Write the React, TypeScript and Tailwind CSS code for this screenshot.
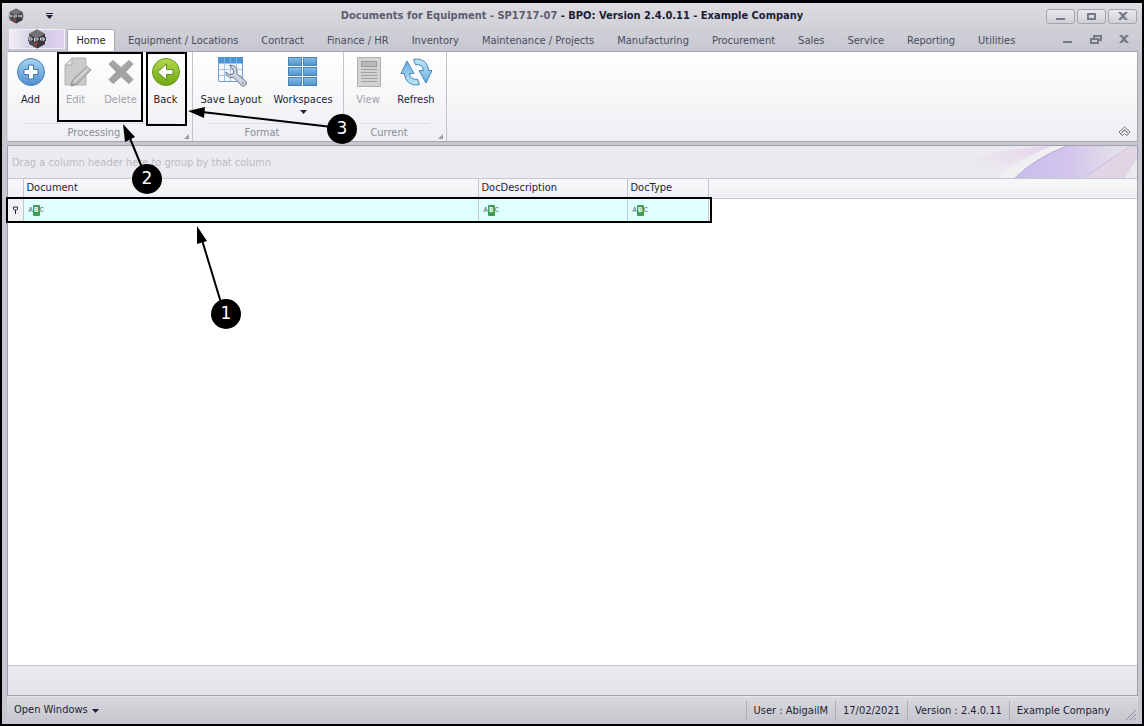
// App.tsx
import React from 'react';
import clsx from 'clsx';

const tabs = [
    'Equipment / Locations',
    'Contract',
    'Finance / HR',
    'Inventory',
    'Maintenance / Projects',
    'Manufacturing',
    'Procurement',
    'Sales',
    'Service',
    'Reporting',
    'Utilities',
];

const columns = [
    { name: 'Document', width: 'w-[455px]' },
    { name: 'DocDescription', width: 'w-[149px]' },
    { name: 'DocType', width: 'w-[81px]' },
];

const LogoIcon: React.FC<{ className?: string }> = ({ className }) => (
    <svg viewBox="0 0 20 20" className={className} aria-hidden="true">
        <path d="M10 .5 18 5v10l-8 4.500L2 15V5z" fill="#4b4b50" />
        <path d="M10 .5 18 5l-8 4.500L2 5z" fill="#737378" />
        <path d="M10 9.500 18 5v10l-8 4.500z" fill="#38383d" />
        <path d="M1 8h18v4H1z" fill="#333338" />
        <path
            d="M2 7v4h3v-2H2M7.500 12.500V9h3.500v2H7.500M13.500 9h3.500v2h-3.500zM17 9v2.500"
            fill="none"
            stroke="#d8d8dc"
            strokeWidth="1"
        />
        <path d="M7 14.500 9 16l1-3" fill="none" stroke="#b13a3f" strokeWidth="1.500" />
    </svg>
);

const AddIcon = () => (
    <svg viewBox="0 0 32 32" className="size-8" aria-hidden="true">
        <defs>
            <linearGradient id="addFill" x1="0" y1="0" x2="0" y2="1">
                <stop offset="0" stopColor="#a9d2f0" />
                <stop offset="1" stopColor="#4d8fce" />
            </linearGradient>
        </defs>
        <circle cx="16" cy="16" r="13.500" fill="url(#addFill)" stroke="#4a7fb5" />
        <path
            d="M13.500 9h5v4.500H23v5h-4.500V23h-5v-4.500H9v-5h4.500z"
            fill="#fff"
            stroke="#3f78b0"
            strokeLinejoin="round"
        />
    </svg>
);

const EditIcon = () => (
    <svg viewBox="0 0 32 32" className="size-8" aria-hidden="true">
        <path d="M12 2h14v27H5V9z" fill="#cbcbcb" stroke="#b4b4b4" />
        <path d="M12 2v7H5z" fill="#e2e2e2" stroke="#adadad" />
        <path d="m11 30 1.500-6L27 10.500l4 3.500-14 14z" fill="#bdbdbd" stroke="#929292" strokeLinejoin="round" />
        <path d="m14.500 25.500 14-13.500" stroke="#dcdcdc" strokeWidth="1.500" />
        <path d="m11 30 .8-3 2.200 2z" fill="#888" />
    </svg>
);

const DeleteIcon = () => (
    <svg viewBox="0 0 32 32" className="size-8" aria-hidden="true">
        <path
            d="M4 8 8 4.500l8 7 8-7L28 8l-7.500 8 7.500 7.500-4 4-8-7-8 7-4-4L11.500 16z"
            fill="#a3a3a3"
            stroke="#969696"
            strokeLinejoin="round"
        />
        <path d="m5 8 3-2.500 8 7 8-7L27 8" fill="none" stroke="#b6b6b6" />
    </svg>
);

const BackIcon = () => (
    <svg viewBox="0 0 32 32" className="size-8" aria-hidden="true">
        <defs>
            <linearGradient id="backFill" x1="0" y1="0" x2="0" y2="1">
                <stop offset="0" stopColor="#b4d84d" />
                <stop offset="1" stopColor="#6fa812" />
            </linearGradient>
        </defs>
        <circle cx="16" cy="16" r="13.500" fill="url(#backFill)" stroke="#669a1c" />
        <path
            d="m7.500 16 9-8v5.500H23v5h-6.500V24z"
            fill="#fff"
            stroke="#5c8f15"
            strokeLinejoin="round"
        />
    </svg>
);

const SaveLayoutIcon = () => (
    <svg viewBox="0 0 32 32" className="size-8" aria-hidden="true">
        <path d="M3.500 2.500h24v23h-24z" fill="#f3f8fd" stroke="#7a9fce" />
        <path d="M3 1h25v6.500H3z" fill="#4b93d1" />
        <path d="M9.500 1v6M15.500 1v6M21.500 1v6" stroke="#7db2e0" />
        <path d="M9.500 8v17M15.500 8v17M21.500 8v17M4 13.500h23M4 19.500h23" stroke="#a9c5e6" />
        <path
            d="M14.500 9.500c4-1 7.500 1.500 7.500 5.500 0 1-.2 1.700-.5 2.500l9 7.500c2.500 2.500-1 7-4 4.500l-8-8.300c-4 1.300-7.500-1-7.500-5.200l4 3 3.200-1.200.5-3.300z"
            fill="#cdd3de"
            stroke="#697385"
            strokeLinejoin="round"
        />
        <circle cx="28" cy="27" r="1" fill="#fff" stroke="#697385" strokeWidth=".6" />
    </svg>
);

const WorkspacesIcon = () => (
    <svg viewBox="0 0 32 32" className="size-8" aria-hidden="true">
        <defs>
            <linearGradient id="tileFill" x1="0" y1="0" x2="0" y2="1">
                <stop offset="0" stopColor="#84bce6" />
                <stop offset="1" stopColor="#4d94cf" />
            </linearGradient>
        </defs>
        {[1.5, 11.5, 21.5].map((y) =>
            [1.5, 16.5].map((x) => (
                <rect key={`${x}-${y}`} x={x} y={y} width="13" height="8" fill="url(#tileFill)" stroke="#4a80b6" />
            )),
        )}
    </svg>
);

const ViewIcon = () => (
    <svg viewBox="0 0 32 32" className="size-8" aria-hidden="true">
        <path d="M5.500 1.500h23v29h-23z" fill="#d2d2d2" stroke="#b0b0b0" />
        <path d="M9.500 5.500h15v5h-15z" fill="#b9b9b9" stroke="#9a9a9a" />
        <path d="M9 13.500h16M9 16.500h16M9 19.500h16M9 22.500h16M9 25.500h16" stroke="#a0a0a0" />
    </svg>
);

const refreshArrow = 'M13.500 3.500C22 1.500 28.500 7 28.500 14.500H32L26 27l-7-12.500h4.500c-.5-4-3.500-6.500-8-5.700z';

const RefreshIcon = () => (
    <svg viewBox="0 0 32 32" className="size-8" aria-hidden="true">
        <defs>
            <linearGradient id="refreshFill" x1="0" y1="0" x2="0" y2="1">
                <stop offset="0" stopColor="#c0e4f8" />
                <stop offset="1" stopColor="#66aee2" />
            </linearGradient>
        </defs>
        <g fill="url(#refreshFill)" stroke="#4684b8" strokeLinejoin="round">
            <path d={refreshArrow} />
            <path d={refreshArrow} transform="rotate(180 16.500 16)" />
        </g>
    </svg>
);

type RibbonButtonProps = {
    label: string;
    icon: React.ReactNode;
    width?: string;
    disabled?: boolean;
    menu?: boolean;
};

const RibbonButton: React.FC<RibbonButtonProps> = ({ label, icon, width = 'w-[45px]', disabled, menu }) => (
    <button
        type="button"
        disabled={disabled}
        className={clsx(
            'flex flex-col items-center whitespace-nowrap',
            width,
            disabled ? 'text-[#a0a0a8]' : 'text-[#1e1e38]',
        )}
    >
        {icon}
        <span className="mt-1 leading-4">{label}</span>
        {menu && <Caret className="mt-0.5" />}
    </button>
);

const Caret: React.FC<{ className?: string }> = ({ className }) => (
    <svg viewBox="0 0 7 4" className={clsx('h-1 w-[7px]', className)} aria-hidden="true">
        <path d="M0 0h7L3.500 4z" fill="#1e1e38" />
    </svg>
);

const RibbonGroup: React.FC<{ title: string; launcher?: boolean; children: React.ReactNode }> = ({
    title,
    launcher,
    children,
}) => (
    <section className="flex flex-col border-r border-[#c3c4cb]">
        <div className="flex flex-1 pt-1 pr-1">{children}</div>
        <div className="mx-4 h-px bg-[#dfe0e5]" />
        <div className="flex h-[17px] items-center pt-0.5 text-[#8b8c98]">
            <span className="flex-1 text-center">{title}</span>
            <span className="flex w-3 self-stretch">
                {launcher && (
                    <button type="button" aria-label={`${title} options`} className="self-end pb-0.5 pl-1">
                        <svg viewBox="0 0 5 5" className="size-[5px]" aria-hidden="true">
                            <path d="M5 0v5H0z" fill="#9b9ca6" />
                        </svg>
                    </button>
                )}
            </span>
        </div>
    </section>
);

const captionPaths = {
    Minimize: 'M3 9h9v2H3z',
    Maximize: 'M3 4h9v7H3zM5 6v3h5V6z',
    Close: 'M3 3h3l2 2 2-2h3L9.500 7l3.500 4h-3L8 9l-2 2H3l3.500-4z',
    Restore: 'M5 3h9v6h-3v3H2V6h3zM7 5v1h4v1h1V5zM4 8v2h5V8z',
};

const CaptionButton: React.FC<{ name: keyof typeof captionPaths; label: string; framed?: boolean }> = ({
    name,
    label,
    framed,
}) => (
    <button
        type="button"
        aria-label={label}
        className={clsx(
            'flex items-center justify-center',
            framed
                ? 'h-[15px] w-[29px] rounded-[3px] border border-[#a3a4ae] bg-linear-to-b from-[#e9e9ed] to-[#cfd0d7]'
                : 'h-4 w-7',
        )}
    >
        <svg viewBox="0 0 16 14" className="h-3.5 w-4" aria-hidden="true">
            <path d={captionPaths[name]} fill="#777987" fillRule="evenodd" />
        </svg>
    </button>
);

const FilterIcon = () => (
    <span aria-hidden="true" className="flex items-center font-['Liberation_Mono',monospace] text-[7px] leading-none text-[#4f6266]">
        A
        <span className="flex h-[11px] w-[7px] items-center justify-center rounded-[1px] bg-[#3f9f51] font-bold text-white">B</span>
        C
    </span>
);

const Callout: React.FC<{ number: number; position: string }> = ({ number, position }) => (
    <span
        className={clsx(
            "absolute flex size-[30px] items-center justify-center rounded-full bg-black font-['DejaVu_Sans',sans-serif] text-[17px] text-white",
            position,
        )}
    >
        {number}
    </span>
);

const Annotations = () => (
    <div className="pointer-events-none absolute inset-0">
        <div className="absolute top-[52px] left-[57px] h-[70px] w-[86px] border-2 border-black" />
        <div className="absolute top-[52px] left-[146px] h-[74px] w-[41px] border-2 border-black" />
        <div className="absolute top-[197px] left-[6px] h-[26px] w-[706px] border-2 border-black" />
        <svg width="400" height="340" className="absolute top-0 left-0" aria-hidden="true">
            <path d="m202 240 20 66M129 136l14 34M202 112l130 15" stroke="#000" strokeWidth="2" />
            <path d="m197 226 10 15-10 3zM123 124l12 13-10 5zM188 111l17-4-1 11z" />
        </svg>
        <Callout number={1} position="top-[299px] left-[211px]" />
        <Callout number={2} position="top-[164px] left-[132px]" />
        <Callout number={3} position="top-[114px] left-[327px]" />
    </div>
);

const TitleBar = () => (
    <header className="flex h-[26px] items-center">
        <div className="flex flex-1 items-center gap-[22px]">
            <LogoIcon className="ml-px size-4" />
            <button type="button" aria-label="Customize quick access toolbar">
                <svg viewBox="0 0 7 6" className="h-1.5 w-[7px]" aria-hidden="true">
                    <path d="M0 0h7v1H0zM0 2h7L3.500 6z" fill="#1e1e38" />
                </svg>
            </button>
        </div>
        <h1 className="font-bold whitespace-nowrap text-[#1c1c38]">
            <span className="text-[#5c5d6f]">Documents for Equipment - SP1717-07</span> - BPO: Version 2.4.0.11 - Example Company
        </h1>
        <div className="flex flex-1 justify-end gap-0.5 pr-px">
            <CaptionButton name="Minimize" label="Minimize" framed />
            <CaptionButton name="Maximize" label="Maximize" framed />
            <CaptionButton name="Close" label="Close" framed />
        </div>
    </header>
);

const TabBar = () => (
    <nav className="flex h-[22px] items-end">
        <button
            type="button"
            aria-label="Application menu"
            className="mx-0.5 mb-0.5 flex h-5 w-14 shrink-0 items-center justify-center border border-[#f1eff8] bg-linear-to-r from-[#f2edf6] via-[#cfcbe0] to-[#dfd0f2]"
        >
            <LogoIcon className="size-5" />
        </button>
        <button
            type="button"
            className="h-full w-12 shrink-0 rounded-t-[2px] border border-b-0 border-[#a9aab4] bg-white pt-0.5 text-[#1e1e38]"
        >
            Home
        </button>
        <div className="ml-0.5 flex h-full flex-1 items-center pt-0.5">
            {tabs.map((tab) => (
                <button key={tab} type="button" className="pr-3 pl-[11px] whitespace-nowrap text-[#4a4b5e]">
                    {tab}
                </button>
            ))}
        </div>
        <div className="mb-1 flex">
            <CaptionButton name="Minimize" label="Minimize document" />
            <CaptionButton name="Restore" label="Restore document" />
            <CaptionButton name="Close" label="Close document" />
        </div>
    </nav>
);

const Ribbon = () => (
    <div className="flex h-[91px] border border-[#a5a6b0] border-l-[#d8d9df] bg-linear-to-b from-white to-[#eeeff3]">
        <RibbonGroup title="Processing" launcher>
            <RibbonButton label="Add" icon={<AddIcon />} />
            <RibbonButton label="Edit" icon={<EditIcon />} disabled />
            <RibbonButton label="Delete" icon={<DeleteIcon />} disabled />
            <RibbonButton label="Back" icon={<BackIcon />} />
        </RibbonGroup>
        <RibbonGroup title="Format">
            <RibbonButton label="Save Layout" icon={<SaveLayoutIcon />} width="ml-0.5 w-[72px]" />
            <RibbonButton label="Workspaces" icon={<WorkspacesIcon />} width="w-[72px]" menu />
        </RibbonGroup>
        <RibbonGroup title="Current" launcher>
            <RibbonButton label="View" icon={<ViewIcon />} width="w-12" disabled />
            <RibbonButton label="Refresh" icon={<RefreshIcon />} width="mr-0.5 w-12" />
        </RibbonGroup>
        <button type="button" aria-label="Collapse ribbon" className="mr-1.5 mb-1 ml-auto self-end">
            <svg viewBox="0 0 13 11" className="h-[11px] w-[13px]" aria-hidden="true">
                <path d="M1 6 6.500 1 12 6l-1.500 1.500L6.500 4 2.500 7.500zM2.500 7.500l4-3.500 4 3.500L9 9.500 6.500 7.500 4 9.500z" fill="#fff" stroke="#6f707d" />
            </svg>
        </button>
    </div>
);

const GroupPanel = () => (
    <div className="flex h-[33px] items-center justify-between border-b border-[#c5c6cd] bg-[#ebebef] pl-1 text-[#babbc3]">
        <span className="pt-0.5">Drag a column header here to group by that column</span>
        <svg viewBox="0 0 190 32" className="h-8 w-[190px]" aria-hidden="true">
            <defs>
                <linearGradient id="petalPink" x1="0" y1="1" x2="1" y2="0">
                    <stop offset="0" stopColor="#ebebef" stopOpacity="0" />
                    <stop offset="1" stopColor="#e6cfec" />
                </linearGradient>
                <linearGradient id="petalViolet" x1="0" y1="0" x2="1" y2="0">
                    <stop offset="0" stopColor="#c9bdea" />
                    <stop offset=".45" stopColor="#d3c5ee" />
                    <stop offset=".8" stopColor="#e2dee9" />
                    <stop offset="1" stopColor="#e6e2ea" />
                </linearGradient>
            </defs>
            <path d="M0 32C20 10 60 2 105 0 82 10 62 18 40 32z" fill="url(#petalPink)" />
            <path d="M50 32Q80 10 105 0h13Q88 12 68 32z" fill="#f0eff2" />
            <path d="M68 32Q88 12 120 0h70L137 32z" fill="url(#petalViolet)" />
            <path d="M68 32Q88 12 120 0" fill="none" stroke="#b5a8d8" />
            <path d="M137 32 183 0h7v12l-12 20z" fill="#e1d5e5" />
            <path d="m137 32 46-32" stroke="#cabddb" />
        </svg>
    </div>
);

const DocumentGrid = () => (
    <table className="w-full table-fixed border-collapse text-left text-[#1e1e38]">
        <thead>
            <tr className="h-[19px] border-b border-[#c5c6cd] bg-linear-to-b from-[#f8f8fa] to-[#eff0f3]">
                <th className="w-[15px] border-r border-[#c5c6cd] p-0" aria-label="Row indicator" />
                {columns.map((column) => (
                    <th key={column.name} className={clsx('border-r border-[#c5c6cd] px-[3px] py-0 font-normal', column.width)}>
                        {column.name}
                    </th>
                ))}
                <td className="p-0" />
            </tr>
        </thead>
        <tbody>
            <tr className="h-6">
                <td className="border-r border-[#c5c6cd] bg-[#f2f2f5] p-0">
                    <svg viewBox="0 0 7 8" className="mx-auto h-2 w-[7px]" aria-hidden="true">
                        <path d="M1.500 1h4v2l-1 1h-2l-1-1z" fill="#fff" stroke="#1e1e38" />
                        <path d="M3.500 4v4" stroke="#1e1e38" />
                    </svg>
                </td>
                {columns.map((column) => (
                    <td key={column.name} className="border-r border-[#c5c6cd] bg-[#e0ffff] px-[5px] py-0">
                        <label className="flex items-center gap-1">
                            <FilterIcon />
                            <input
                                type="text"
                                aria-label={`Filter ${column.name}`}
                                className="h-5 min-w-0 flex-1 bg-transparent outline-none"
                            />
                        </label>
                    </td>
                ))}
                <td className="p-0" />
            </tr>
        </tbody>
    </table>
);

const StatusBar = () => (
    <footer className="flex h-7 items-center justify-between border-t border-[#e8e8ec] bg-linear-to-b from-[#d8d9de] to-[#c5c6cd] text-[#1e1e38]">
        <button type="button" className="flex items-center gap-1 pl-[7px]">
            Open Windows
            <Caret />
        </button>
        <div className="flex items-center">
            {['User : AbigailM', '17/02/2021', 'Version : 2.4.0.11', 'Example Company'].map((item) => (
                <span key={item} className="border-l border-[#adaeb7] px-[7px] leading-5">
                    {item}
                </span>
            ))}
            <svg viewBox="0 0 12 12" className="mr-px ml-2 size-3 self-end" aria-hidden="true">
                <path d="M1 11 11 1M5 11l6-6M9 11l2-2" stroke="#8f909b" />
            </svg>
        </div>
    </footer>
);

const App: React.FC = () => (
    <div className="relative flex min-h-screen flex-col border-2 border-t-[3px] border-black bg-[#c8c9d1] bg-linear-to-b from-[#dcdce1] to-[#c6c7d0] to-[48px] pr-1 pl-[5px] font-['DejaVu_Sans_Condensed','DejaVu_Sans',sans-serif] text-[11px]">
        <TitleBar />
        <TabBar />
        <Ribbon />
        <main className="mt-[3px] flex flex-1 flex-col border border-[#a0a1ab] bg-white">
            <GroupPanel />
            <DocumentGrid />
            <div className="mt-auto h-[30px] border-t border-[#c5c6cd] bg-linear-to-b from-[#ebebef] to-[#e2e3e8]" />
        </main>
        <StatusBar />
        <div className="absolute -top-[3px] -left-0.5">
            <Annotations />
        </div>
    </div>
);

export default App;
